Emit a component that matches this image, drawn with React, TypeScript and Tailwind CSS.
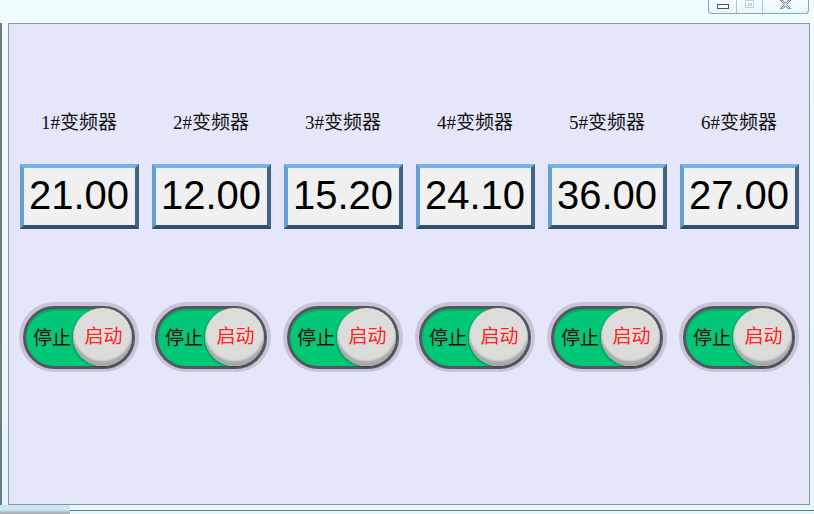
import React from "react";

const values = ["21.00", "12.00", "15.20", "24.10", "36.00", "27.00"];

function NumberBox({ v }: { v: string }) {
  return (
    <div className="w-[119px] h-[65px] border-[4px] border-t-[#78b2e4] border-l-[#64a0d4] border-r-[#3f6688] border-b-[#32506c] bg-[#f0f0f0] flex items-center justify-center pb-[3px]">
      <span className="text-[40px] leading-none text-black" style={{ fontFamily: '"Liberation Sans", Arial, sans-serif' }}>
        {v}
      </span>
    </div>
  );
}

function Toggle() {
  return (
    <div className="w-[120px] h-[70px] rounded-full bg-[#c6c4d6] pt-[4px] px-[4px] pb-[3px]">
      <div className="relative w-full h-full rounded-full border-[3px] border-[#56565f] bg-[#00c876] shadow-[inset_0_2px_0_rgba(0,0,0,0.12)]">
        <span className="absolute left-[7px] top-1/2 -translate-y-1/2 text-[19px] leading-none text-[#111]">停止</span>
        <div className="absolute right-[0px] top-[-1px] w-[59px] h-[58px] rounded-full bg-[#dcdcda] shadow-[inset_0_-5px_2px_#a9a9a9,-1px_1px_2px_rgba(0,0,0,0.25)] flex items-center justify-center pl-[2px] pb-[2px]">
          <span className="text-[19px] leading-none text-[#ff2020]">启动</span>
        </div>
      </div>
    </div>
  );
}

export default function App() {
  return (
    <div
      className="relative w-[814px] h-[514px] overflow-hidden bg-gradient-to-b from-[#effdff] to-[#e2f8fb] flex flex-col"
      style={{ fontFamily: '"Liberation Serif", "Noto Sans CJK SC", serif' }}
    >
      {/* title bar */}
      <div className="h-[23px] shrink-0" />
      {/* window controls */}
      <div className="absolute top-0 left-[708px] w-[101px] h-[14px] border border-t-0 border-[#95a3ae] rounded-b-[4px] bg-gradient-to-b from-[#f6feff] to-[#e4f6fa] flex">
        <div className="w-[28px] h-full border-r border-[#b2c0ca] flex items-center justify-center">
          <div className="w-[12px] h-[5px] border border-[#4a5560] bg-white mb-[1px]" />
        </div>
        <div className="w-[26px] h-full border-r border-[#b2c0ca] flex items-start justify-center">
          <div className="w-[9px] h-[8px] border border-[#c4ccd2] mt-0 flex items-center justify-center">
            <div className="w-[4px] h-[3px] border border-[#c4ccd2]" />
          </div>
        </div>
        <div className="flex-1 h-full flex items-start justify-center">
          <svg width="13" height="9" viewBox="0 0 13 9">
            <path d="M1 0 L5.5 4.5 L1 9 M12 0 L7.5 4.5 L12 9 M1 0 H3.5 L6.5 3.2 L9.5 0 H12 M1 9 H3.5 L6.5 5.8 L9.5 9 H12" fill="#f4f6f8" stroke="#6b7680" strokeWidth="1" />
          </svg>
        </div>
      </div>

      <div className="flex flex-1 min-h-0">
        {/* left frame */}
        <div className="w-[8px] shrink-0 border-l-[2px] border-[#6f7a82]" />
        {/* client panel */}
        <div className="w-[802px] h-[482px] border border-[#8a96a0] bg-[#e6e6fa] pt-[86px] pl-[4px]">
          <div className="grid grid-cols-[repeat(6,132px)]">
            {values.map((_, i) => (
              <div key={i} className="flex justify-center h-[24px] items-center text-[19px] leading-none text-[#111]">
                {i + 1}#变频器
              </div>
            ))}
          </div>
          <div className="grid grid-cols-[repeat(6,132px)] mt-[30px]">
            {values.map((v, i) => (
              <div key={i} className="flex justify-center">
                <NumberBox v={v} />
              </div>
            ))}
          </div>
          <div className="grid grid-cols-[repeat(6,132px)] mt-[73px]">
            {values.map((_, i) => (
              <div key={i} className="flex justify-center">
                <Toggle />
              </div>
            ))}
          </div>
        </div>
        <div className="flex-1" />
      </div>
      {/* bottom frame */}
      <div className="h-[9px] shrink-0 flex">
        <div className="w-[70px] h-full bg-gradient-to-b from-[#cde6f6] via-[#cde6f6] to-[#a6a6a6]" />
        <div className="flex-1 h-[6px] border-b border-[#6f7a82]" />
      </div>
    </div>
  );
}
